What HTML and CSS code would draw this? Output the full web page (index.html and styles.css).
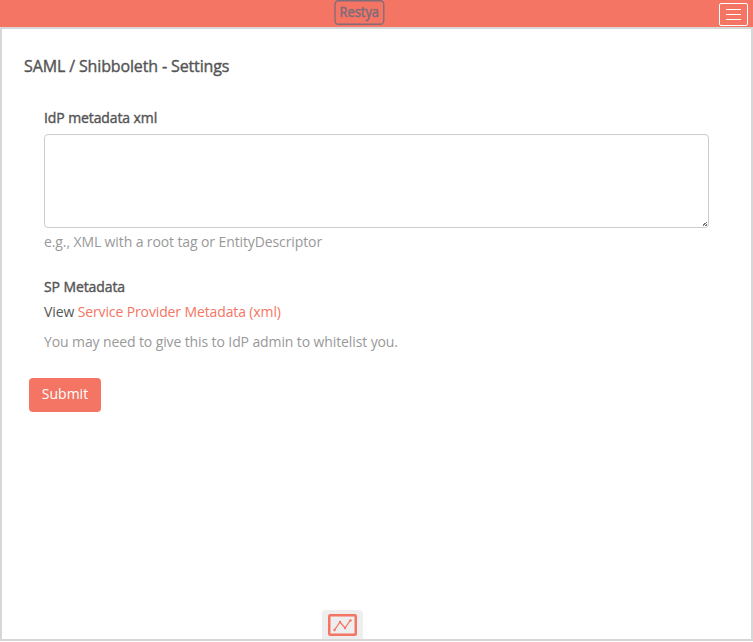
FILE: index.html
```html
<!DOCTYPE html>
<html lang="en">
<head>
<meta charset="utf-8">
<title>SAML / Shibboleth - Settings</title>
<link rel="stylesheet" href="styles.css">
</head>
<body>
<header class="navbar">
  <a class="brand">
    <svg width="51" height="26" viewBox="0 0 51 26"><rect x="1" y=".75" width="48.8" height="23.5" rx="3.5" fill="none" stroke="#806b79" stroke-width="1.3"/><text class="brand-text" x="5.5" y="17" textLength="39.5" lengthAdjust="spacingAndGlyphs">Restya</text></svg>
  </a>
  <button class="menu" aria-label="Menu"><span></span><span></span><span></span></button>
</header>
<main class="panel">
  <h1 class="title">SAML / Shibboleth - Settings</h1>
  <form class="form">
    <label class="label" for="idp">IdP metadata xml</label>
    <textarea class="field" id="idp"></textarea>
    <p class="help">e.g., XML with a root tag or EntityDescriptor</p>
    <div class="label sp">SP Metadata</div>
    <p class="view">View <a class="link">Service Provider Metadata (xml)</a></p>
    <p class="help note">You may need to give this to IdP admin to whitelist you.</p>
    <button class="submit" type="button">Submit</button>
  </form>
  <div class="chart-tab">
    <svg width="29" height="22" viewBox="0 0 29 22" fill="none" stroke="#f47564"><rect x="1.25" y="1.25" width="26.5" height="19.5" rx="1" stroke-width="2.5"/><path d="M6.5 16 12 8l5 6 5.5-8" stroke-width="1.3"/><g fill="#f47564" stroke="none"><circle cx="6.5" cy="16" r="1.2"/><circle cx="12" cy="8" r="1.2"/><circle cx="17" cy="14" r="1.2"/><circle cx="22.5" cy="6.5" r="1.2"/></g></svg>
  </div>
</main>
</body>
</html>
```
FILE: styles.css
```css
* { box-sizing: border-box; }
body {
  margin: 0;
  height: 642px;
  overflow: hidden;
  background: #fff;
  color: #555;
  font: 14px/20px "Open Sans", sans-serif;
}
h1, p { margin: 0; }
.navbar {
  display: grid;
  grid-template-columns: 334px 1fr auto;
  height: 27px;
  padding-right: 5px;
  background: #f47564;
}
.brand { grid-column: 2; height: 26px; }
.brand svg { display: block; }
.brand-text {
  font: 500 14px "Open Sans", sans-serif;
  fill: #806b79;
  stroke: #806b79;
  stroke-width: .5px;
}
.menu {
  display: flex;
  flex-direction: column;
  align-items: center;
  justify-content: center;
  gap: 4px;
  width: 29px;
  height: 23px;
  margin-top: 3px;
  padding: 0;
  border: 1px solid #fff;
  border-radius: 2px;
  background: none;
}
.menu span { width: 15px; height: 1px; background: #fff; }
.panel {
  display: flex;
  flex-direction: column;
  height: 614px;
  padding: 27px 20px 0 22px;
  border: 2px solid #d7d7d7;
}
.title {
  font-size: 16px;
  line-height: 20px;
  font-weight: 400;
  letter-spacing: -.13px;
  -webkit-text-stroke: .4px #555;
}
.form {
  display: flex;
  flex-direction: column;
  padding: 32px 22px 0 20px;
}
.label { letter-spacing: -.1px; -webkit-text-stroke: .4px #555; }
.field {
  display: block;
  width: 665px;
  height: 94px;
  margin: 6px 0 4px;
  border: 1px solid #ccc;
  border-radius: 4px;
  background: #fff;
  resize: both;
}
.field::-webkit-resizer {
  background:
    linear-gradient(135deg, transparent 50%, #777 50%, #777 62%, transparent 62%, transparent 76%, #777 76%, #777 90%, transparent 90%) right 1px bottom 1px / 5px 5px no-repeat;
}
.help { color: #999; letter-spacing: -.11px; }
.sp { margin-top: 25px; }
.view { margin-top: 5px; letter-spacing: -.12px; }
.link { color: #f47564; }
.note { margin-top: 10px; }
.submit {
  width: 72px;
  height: 34px;
  margin: 26px 0 0 -15px;
  padding: 0 0 2px;
  border: 0;
  border-radius: 4px;
  background: #f47564;
  color: #fff;
  font: inherit;
}
.chart-tab {
  display: flex;
  justify-content: center;
  width: 41px;
  height: 29px;
  margin: auto 0 0 298px;
  padding-top: 4px;
  border-radius: 4px 4px 0 0;
  background: #eee;
}
```
